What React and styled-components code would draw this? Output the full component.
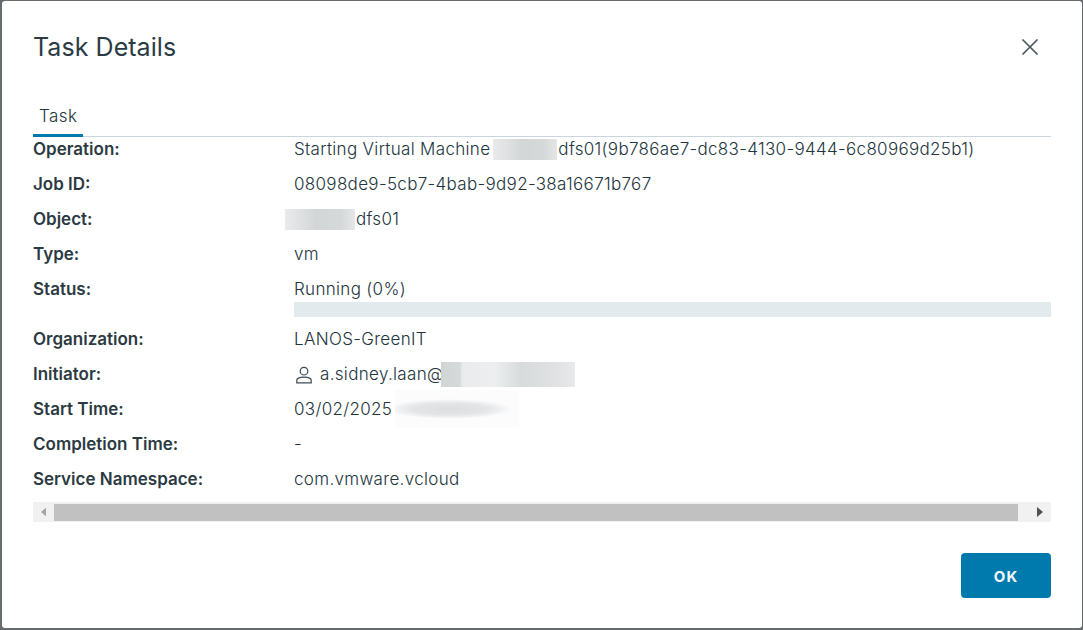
import React from "react";
import styled, { createGlobalStyle } from "styled-components";

const Global = createGlobalStyle`
  html, body { margin: 0; padding: 0; width: 1083px; height: 630px; overflow: hidden; background: #666b6e; }
  body { font-family: "Inter", "Noto Sans", "Liberation Sans", sans-serif; color: #2f3e47; }
`;

const Page = styled.div`
  box-sizing: border-box;
  width: 1083px;
  height: 630px;
  padding: 1px 1px 2px 2px;
  display: flex;
`;

const Modal = styled.div`
  flex: 1;
  box-sizing: border-box;
  background: #fff;
  border-radius: 3px;
  padding: 0 31px 0 31px;
  display: flex;
  flex-direction: column;
`;

const Header = styled.header`
  height: 92px;
  display: flex;
  align-items: flex-start;
  justify-content: space-between;
  padding-top: 29px;
  box-sizing: border-box;
`;

const Title = styled.h1`
  margin: 0;
  font-size: 25px;
  line-height: 34px;
  font-weight: 400;
  color: #2a3b44;
  letter-spacing: 0.05px;
`;

const Close = styled.button`
  border: 0;
  background: none;
  padding: 0;
  width: 18px;
  height: 18px;
  margin: 8px 12px 0 0;
  color: #49575f;
  display: block;
  svg { display: block; }
`;

const Tabs = styled.nav`
  height: 44px;
  box-sizing: border-box;
  border-bottom: 1px solid #c9d6dd;
  display: flex;
`;

const Tab = styled.div`
  box-sizing: border-box;
  height: 44px;
  width: 50px;
  padding: 11px 0 0 6px;
  font-size: 17px;
  line-height: 24px;
  font-weight: 300;
  letter-spacing: 0.45px;
  color: #22343c;
  border-bottom: 3px solid #0079ad;
`;

const Rows = styled.dl`
  margin: 0;
  display: flex;
  flex-direction: column;
`;

const Row = styled.div`
  display: grid;
  grid-template-columns: 261px 1fr;
  height: 35px;
  font-size: 17px;
  line-height: 24px;
`;

const StatusRow = styled(Row)`
  height: 50px;
`;

const Label = styled.dt`
  font-weight: 600;
  color: #2b3a42;
`;

const Value = styled.dd`
  margin: 0;
  display: flex;
  align-items: flex-start;
  font-weight: 300;
  letter-spacing: 0.32px;
  color: #22343c;
  white-space: nowrap;
`;

const ValueStack = styled(Value)`
  flex-direction: column;
`;

const Progress = styled.div`
  width: 100%;
  height: 15px;
  background: #e3eaed;
  margin-top: 1px;
`;

const Masked = styled.span`
  display: inline-block;
  flex: none;
  width: ${(p) => p.$w}px;
  height: ${(p) => p.$h}px;
  margin: ${(p) => p.$m || "0"};
  background: ${(p) => p.$bg};
`;

const Person = styled.svg`
  flex: none;
  margin: 4px 7px 0 1px;
  color: #3d4c55;
`;

const Scrollbar = styled.div`
  height: 20px;
  background: #f1f1f1;
  display: flex;
  align-items: center;
`;

const ScrollButton = styled.div`
  width: ${(p) => p.$w}px;
  height: 20px;
  flex: none;
  display: flex;
  align-items: center;
  justify-content: ${(p) => p.$align};
  padding: 0 8px;
  box-sizing: border-box;
`;

const ScrollThumb = styled.div`
  flex: 1;
  height: 17px;
  margin-top: 1px;
  background: #c1c1c1;
`;

const Footer = styled.footer`
  display: flex;
  justify-content: flex-end;
  margin-top: 31px;
`;

const OkButton = styled.button`
  width: 90px;
  height: 45px;
  border: 0;
  border-radius: 4px;
  background: #0079ad;
  color: #f4f9fb;
  font-family: inherit;
  font-size: 15px;
  font-weight: 700;
  letter-spacing: 1.2px;
  padding: 1px 0 0;
`;

const maskA = "linear-gradient(90deg,#e9eaeb,#d3d6d7 45%,#d6d9da 80%,#e4e6e7)";
const maskB = "linear-gradient(90deg,#d2d5d6 0,#d6d9da 14%,#e9ebec 16%,#eceeef 40%,#d8dbdc 60%,#dfe1e2 85%,#e8e9ea)";
const maskC = "radial-gradient(ellipse 50% 26% at 44% 50%,#dcdfe1 0,#e3e5e7 60%,#f3f4f5 88%,#fcfcfc 100%),#fcfcfc";

export default function App() {
  return (
    <Page>
      <Global />
      <Modal>
        <Header>
          <Title>Task Details</Title>
          <Close aria-label="Close">
            <svg width="18" height="18" viewBox="0 0 18 18" fill="none" stroke="currentColor" strokeWidth="1.7">
              <path d="M1.5 1.5 L16.5 16.5 M16.5 1.5 L1.5 16.5" />
            </svg>
          </Close>
        </Header>
        <Tabs>
          <Tab>Task</Tab>
        </Tabs>
        <Rows>
          <Row>
            <Label>Operation:</Label>
            <Value>
              Starting Virtual Machine
              <Masked $w={64} $h={21} $m="2px 1px 0 3px" $bg={maskA} />
              dfs01(9b786ae7-dc83-4130-9444-6c80969d25b1)
            </Value>
          </Row>
          <Row>
            <Label>Job ID:</Label>
            <Value>08098de9-5cb7-4bab-9d92-38a16671b767</Value>
          </Row>
          <Row>
            <Label>Object:</Label>
            <Value>
              <Masked $w={70} $h={21} $m="2px 1px 0 -9px" $bg={maskA} />
              dfs01
            </Value>
          </Row>
          <Row>
            <Label>Type:</Label>
            <Value>vm</Value>
          </Row>
          <StatusRow>
            <Label>Status:</Label>
            <ValueStack>
              Running (0%)
              <Progress />
            </ValueStack>
          </StatusRow>
          <Row>
            <Label>Organization:</Label>
            <Value>LANOS-GreenIT</Value>
          </Row>
          <Row>
            <Label>Initiator:</Label>
            <Value>
              <Person width="18" height="18" viewBox="0 0 16 16" fill="none" stroke="currentColor" strokeWidth="1.1">
                <circle cx="8" cy="4.6" r="3.4" />
                <path d="M1.6 15 V12.6 C1.6 11 4 9.8 8 9.8 C12 9.8 14.4 11 14.4 12.6 V15 Z" />
              </Person>
              a.sidney.laan@
              <Masked $w={134} $h={25} $m="0 0 0 -3px" $bg={maskB} />
            </Value>
          </Row>
          <Row>
            <Label>Start Time:</Label>
            <Value>
              03/02/2025
              <Masked $w={124} $h={38} $m="-7px 0 0 3px" $bg={maskC} />
            </Value>
          </Row>
          <Row>
            <Label>Completion Time:</Label>
            <Value>-</Value>
          </Row>
          <Row>
            <Label>Service Namespace:</Label>
            <Value>com.vmware.vcloud</Value>
          </Row>
        </Rows>
        <Scrollbar>
          <ScrollButton $w={21} $align="center">
            <svg width="6" height="10" viewBox="0 0 6 10"><path d="M6 0 V10 L0 5 Z" fill="#a3a3a3" /></svg>
          </ScrollButton>
          <ScrollThumb />
          <ScrollButton $w={33} $align="flex-end">
            <svg width="6" height="10" viewBox="0 0 6 10"><path d="M0 0 V10 L6 5 Z" fill="#505050" /></svg>
          </ScrollButton>
        </Scrollbar>
        <Footer>
          <OkButton>OK</OkButton>
        </Footer>
      </Modal>
    </Page>
  );
}
